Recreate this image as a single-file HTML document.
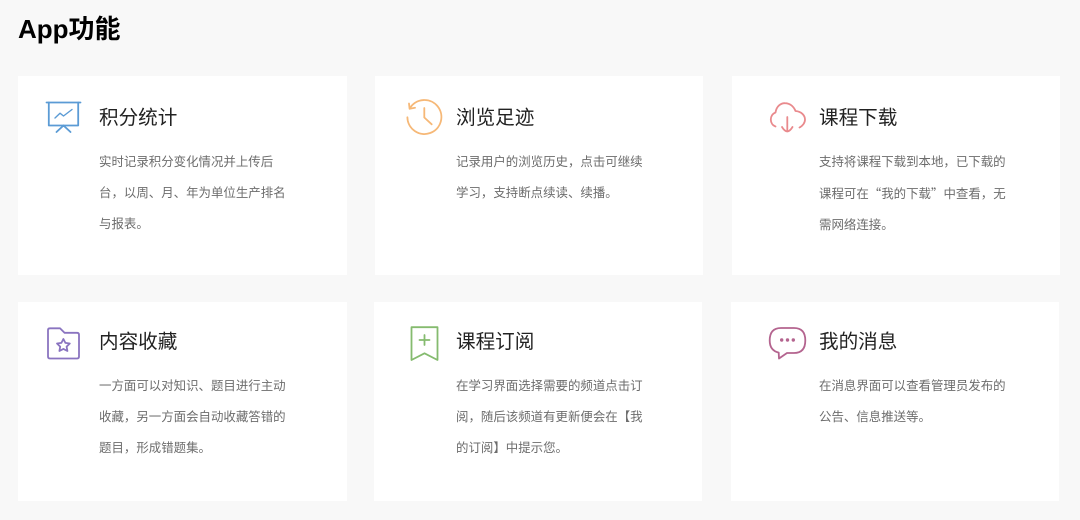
<!DOCTYPE html>
<html lang="zh-CN">
<head>
<meta charset="utf-8">
<title>App功能</title>
<style>
html,body{margin:0;padding:0;width:1080px;height:520px;overflow:hidden;background:#f8f8f8;}
body{position:relative;font-family:"Liberation Sans","Noto Sans CJK SC",sans-serif;}
h1{position:absolute;left:18px;top:11px;margin:0;font-size:26px;line-height:36px;font-weight:700;color:#000;}
.c{position:absolute;background:#fff;width:329px;height:199px;}
.t{position:absolute;font-size:19.6px;line-height:28px;color:#222;white-space:nowrap;}
.d{position:absolute;font-size:12.45px;line-height:31px;color:#6c6c6c;white-space:nowrap;}
.q{font-family:"Noto Sans CJK SC",sans-serif;font-feature-settings:"fwid";}
svg{position:absolute;left:0;top:0;}
</style>
</head>
<body>
<h1>App功能</h1>
<div class="c" style="left:18px;top:76px"></div>
<div class="c" style="left:375px;top:76px;width:328px"></div>
<div class="c" style="left:732px;top:76px;width:328px"></div>
<div class="c" style="left:18px;top:302px"></div>
<div class="c" style="left:374px;top:302px;width:328px"></div>
<div class="c" style="left:731px;top:302px;width:328px"></div>

<div class="t" style="left:99px;top:104px">积分统计</div>
<div class="d" style="left:99px;top:147px">实时记录积分变化情况并上传后<br>台，以周、月、年为单位生产排名<br>与报表。</div>

<div class="t" style="left:456px;top:104px">浏览足迹</div>
<div class="d" style="left:456px;top:147px">记录用户的浏览历史，点击可继续<br>学习，支持断点续读、续播。</div>

<div class="t" style="left:819px;top:104px">课程下载</div>
<div class="d" style="left:819px;top:147px">支持将课程下载到本地，已下载的<br>课程可在<span class="q">“</span>我的下载<span class="q">”</span>中查看，无<br>需网络连接。</div>

<div class="t" style="left:99px;top:328px">内容收藏</div>
<div class="d" style="left:99px;top:371px">一方面可以对知识、题目进行主动<br>收藏，另一方面会自动收藏答错的<br>题目，形成错题集。</div>

<div class="t" style="left:456px;top:328px">课程订阅</div>
<div class="d" style="left:456px;top:371px">在学习界面选择需要的频道点击订<br>阅，随后该频道有更新便会在【我<br>的订阅】中提示您。</div>

<div class="t" style="left:819px;top:328px">我的消息</div>
<div class="d" style="left:819px;top:371px">在消息界面可以查看管理员发布的<br>公告、信息推送等。</div>

<svg width="1080" height="520" viewBox="0 0 1080 520" fill="none" stroke-linecap="round" stroke-linejoin="round">
  <!-- presentation board -->
  <g stroke="#5b9bd5" stroke-width="1.8">
    <path d="M46.5 102.5H80.5"/>
    <path d="M48.8 102.5V125.5H78.2V102.5"/>
    <path d="M55 118L60 113.2L63.5 116L72 109.5" stroke-width="1.4"/>
    <path d="M63.5 125.5L56.5 132M63.5 125.5L70.5 132"/>
  </g>
  <!-- history clock -->
  <g stroke="#f6b877" stroke-width="1.8">
    <path d="M410 108A17 17 0 1 1 407.4 117.3"/>
    <path d="M409 103.5L409.6 108.8L415 107.8"/>
    <path d="M424.3 108V117.5L431.7 124.3"/>
  </g>
  <!-- cloud download -->
  <g stroke="#e98a8d" stroke-width="1.8">
    <path d="M775.5 126.5C769.5 124.5 769 115 775.5 112.5C776.5 106 781 103 785 103.2C789.5 103.3 793.5 106 795.5 111C801.5 111.5 805 115.5 805 119.5C805 123 802.5 126 799.5 127.5"/>
    <path d="M787.3 117V131"/>
    <path d="M782 127C783.5 129.5 785.5 131.3 787.3 131.5C789.2 131.3 791 129.5 792.5 127"/>
  </g>
  <!-- folder star -->
  <g stroke="#8a74c0" stroke-width="1.8">
    <path d="M48 330Q48 328.3 50 328.3H60L64.5 332.8H77Q79 332.8 79 334.8V356.5Q79 358.5 77 358.5H50Q48 358.5 48 356.5Z"/>
    <path d="M63.4 339L65.4 342.9L69.8 343.5L66.6 346.6L67.4 351L63.4 348.9L59.4 351L60.2 346.6L57 343.5L61.4 342.9Z"/>
  </g>
  <!-- bookmark plus -->
  <g stroke="#85bb6f" stroke-width="1.8">
    <path d="M411.5 327.2H437.5V360L424.5 353.3L411.5 360Z"/>
    <path d="M424.5 335V345M419.5 340H429.5"/>
  </g>
  <!-- chat bubble -->
  <path d="M781 328H794Q805.3 328 805.3 340.5Q805.3 353 794 353H787L779 358.5L778.7 352.6Q769.7 350.5 769.7 340.5Q769.7 328 781 328Z" stroke="#b4648f" stroke-width="1.8"/>
  <g fill="#b4648f">
    <circle cx="781.7" cy="340" r="1.7"/>
    <circle cx="787.5" cy="340" r="1.7"/>
    <circle cx="793.3" cy="340" r="1.7"/>
  </g>
</svg>
</body>
</html>
